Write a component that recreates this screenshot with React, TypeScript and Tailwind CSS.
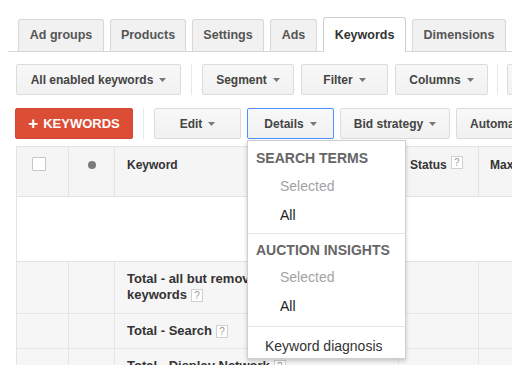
import React from 'react'

const Caret = ({ color = '#777' }: { color?: string }) => (
  <svg width="7" height="4" viewBox="0 0 7 4" className="ml-[6px] flex-none">
    <path d="M0 0 L7 0 L3.5 4 Z" fill={color} />
  </svg>
)

const Help = () => (
  <span className="inline-flex items-center justify-center w-[12px] h-[13px] border border-[#d0d0d0] text-[10px] font-normal text-[#999] leading-none align-middle ml-[4px] bg-white">
    ?
  </span>
)

function ToolButton({
  label,
  width,
  active = false,
  caret = true,
}: {
  label: string
  width: string
  active?: boolean
  caret?: boolean
}) {
  return (
    <div
      className={`${width} h-[31px] flex-none flex items-center justify-center rounded-[2px] border text-[12px] font-bold text-[#444] bg-gradient-to-b from-[#f8f8f8] to-[#f1f1f1] ${
        active ? 'border-[#4d90fe]' : 'border-[#dcdcdc]'
      }`}
    >
      <span>{label}</span>
      {caret && <Caret />}
    </div>
  )
}

const Sep = () => <div className="w-px h-[31px] bg-[#e8e8e8] flex-none" />

export default function App() {
  const tabs = [
    { label: 'Ad groups', w: 'w-[86px]' },
    { label: 'Products', w: 'w-[76px]' },
    { label: 'Settings', w: 'w-[72px]' },
    { label: 'Ads', w: 'w-[47px]' },
    { label: 'Keywords', w: 'w-[83px]', active: true },
    { label: 'Dimensions', w: 'w-[94px]' },
  ]

  return (
    <div
      className="w-[523px] h-[374px] bg-white overflow-hidden"
      style={{ fontFamily: '"Liberation Sans", Arial, sans-serif' }}
    >
      <div className="ml-2 w-[504px] h-[365px] overflow-hidden relative">
        {/* Tabs */}
        <div className="h-[52px] border-b border-[#d6d6d6] flex items-end pl-[10px] gap-[6px]">
          {tabs.map((t) =>
            t.active ? (
              <div
                key={t.label}
                className={`${t.w} h-[35px] -mb-px flex-none flex items-center justify-center bg-white border border-b-0 border-[#d0d0d0] rounded-t-[3px] text-[12.5px] font-bold text-[#333]`}
              >
                {t.label}
              </div>
            ) : (
              <div
                key={t.label}
                className={`${t.w} h-[32px] flex-none flex items-center justify-center bg-[#f1f1f1] border border-b-0 border-[#d8d8d8] rounded-t-[3px] text-[12.5px] font-bold text-[#555]`}
              >
                {t.label}
              </div>
            )
          )}
        </div>

        {/* Toolbar 1 */}
        <div className="flex items-center mt-3 pl-2 h-[31px]">
          <ToolButton label="All enabled keywords" width="w-[165px]" />
          <div className="mx-[10px] flex"><Sep /></div>
          <div className="flex gap-[7px]">
            <ToolButton label="Segment" width="w-[92px]" />
            <ToolButton label="Filter" width="w-[87px]" />
            <ToolButton label="Columns" width="w-[93px]" />
          </div>
          <div className="mx-[9px] flex"><Sep /></div>
          <ToolButton label="" width="w-[60px]" caret={false} />
        </div>

        {/* Toolbar 2 */}
        <div className="flex items-center mt-[13px] pl-[7px] h-[31px] relative">
          <div className="w-[118px] h-[31px] flex-none flex items-center justify-center rounded-[2px] bg-[#dc4d36] border border-[#d14836] text-white text-[13px] font-bold">
            <span className="text-[17px] leading-none mr-[5px] font-black">+</span>
            <span>KEYWORDS</span>
          </div>
          <div className="mx-[10px] flex"><Sep /></div>
          <div className="flex gap-[6px]">
            <ToolButton label="Edit" width="w-[87px]" />
            <ToolButton label="Details" width="w-[87px]" active />
            <ToolButton label="Bid strategy" width="w-[110px]" />
            <div className="w-[80px] h-[31px] flex-none flex items-center pl-[13px] rounded-[2px] border border-[#dcdcdc] bg-gradient-to-b from-[#f8f8f8] to-[#f1f1f1] text-[12px] font-bold text-[#444] whitespace-nowrap">
              Automated
            </div>
          </div>
        </div>

        {/* Table */}
        <div className="mt-[7px] ml-2 w-[520px] border-l border-t border-[#e3e3e3]">
          <div className="grid grid-cols-[52px_46px_284px_80px_1fr] h-[50px] bg-[#f5f5f5] border-b border-[#e3e3e3] text-[12px] font-bold text-[#333]">
            <div className="border-r border-[#e3e3e3] pl-[15px] pt-[10px]">
              <div className="w-[14px] h-[14px] bg-white border border-[#c6c6c6] rounded-[1px]" />
            </div>
            <div className="border-r border-[#e3e3e3] flex justify-center pt-[14px]">
              <div className="w-[8px] h-[8px] rounded-full bg-[#7b7b7b]" />
            </div>
            <div className="border-r border-[#e3e3e3] pl-[12px] pt-[9px]">Keyword</div>
            <div className="border-r border-[#e3e3e3] pl-[11px] pt-[9px] flex items-start">
              <span>Status</span>
              <Help />
            </div>
            <div className="pl-[11px] pt-[9px] whitespace-nowrap">Max. CPC</div>
          </div>

          <div className="h-[65px] bg-white border-b border-[#e3e3e3]" />

          {[
            { h: 'h-[52px]', content: (<>Total - all but removed<br />keywords<Help /></>) },
            { h: 'h-[35px]', content: (<>Total - Search<Help /></>) },
            { h: 'h-[30px]', content: (<>Total - Display Network<Help /></>) },
          ].map((r, i) => (
            <div
              key={i}
              className={`grid grid-cols-[52px_46px_284px_80px_1fr] ${r.h} bg-[#f6f6f6] border-b border-[#e6e6e6] text-[13px] font-bold text-[#333] leading-[16px]`}
            >
              <div className="border-r border-[#e6e6e6]" />
              <div className="border-r border-[#e6e6e6]" />
              <div className="border-r border-[#e6e6e6] pl-[12px] pt-[9px]">{r.content}</div>
              <div className="border-r border-[#e6e6e6]" />
              <div />
            </div>
          ))}
        </div>

        {/* Details dropdown menu */}
        <div className="absolute left-[239px] top-[140px] w-[159px] h-[219px] bg-white border border-[#cfcfcf] shadow-[0_2px_4px_rgba(0,0,0,0.2)] pt-[3px] text-[14px]">
          <div className="h-[28px] flex items-center pl-[8px] font-bold text-[#666]">SEARCH TERMS</div>
          <div className="h-[28px] flex items-center pl-[32px] text-[#a3a3a3]">Selected</div>
          <div className="h-[30px] flex items-center pl-[32px] text-[#222]">All</div>
          <div className="my-[3px] h-px bg-[#e5e5e5]" />
          <div className="h-[26px] flex items-center pl-[8px] font-bold text-[#666]">AUCTION INSIGHTS</div>
          <div className="h-[28px] flex items-center pl-[32px] text-[#a3a3a3]">Selected</div>
          <div className="h-[30px] flex items-center pl-[32px] text-[#222]">All</div>
          <div className="my-[5px] h-px bg-[#e5e5e5]" />
          <div className="h-[28px] flex items-center pl-[17px] text-[#333]">Keyword diagnosis</div>
        </div>
      </div>
    </div>
  )
}
